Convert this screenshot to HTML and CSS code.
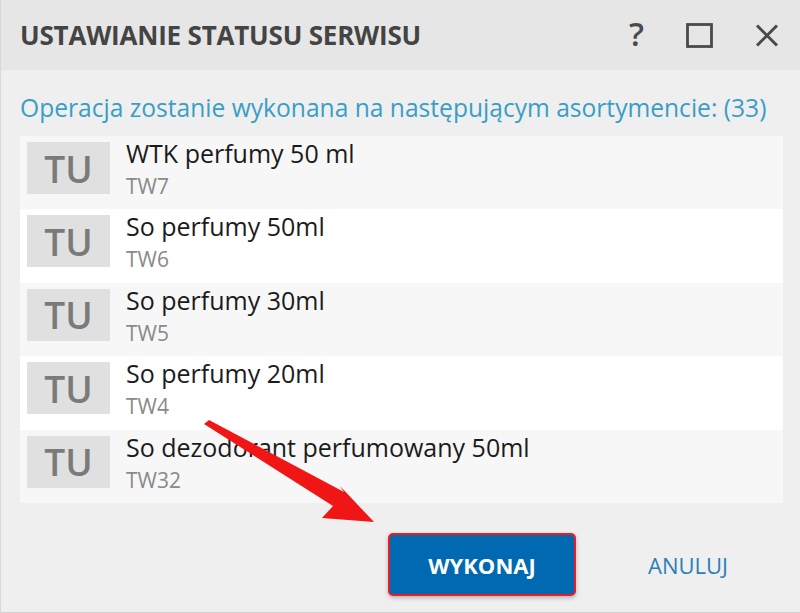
FILE: index.html
```html
<!DOCTYPE html>
<html lang="pl">
<head>
  <meta charset="UTF-8" />
  <title>Ustawianie statusu serwisu</title>
  <link rel="stylesheet" href="styles.css">
</head>
<body>
  <div class="dialog">
    <div class="header">
      <h1>Ustawianie statusu serwisu</h1>
      <div class="header-icons">
        <span class="help">?</span>
        <svg class="icon" width="27" height="25" viewBox="0 0 27 25"><rect x="1.5" y="1.5" width="24" height="22" fill="none" stroke="#4a4a4a" stroke-width="2.8"/></svg>
        <svg class="icon" width="24" height="23" viewBox="0 0 24 23"><path d="M2 1.5 L22 21.5 M22 1.5 L2 21.5" stroke="#4a4a4a" stroke-width="3"/></svg>
      </div>
    </div>

    <div class="content">
      <p class="info">Operacja zostanie wykonana na następującym asortymencie: (33)</p>
      <div class="list">
        <div class="row">
          <div class="thumb">TU</div>
          <div class="text"><div class="name">WTK perfumy 50 ml</div><div class="code">TW7</div></div>
        </div>
        <div class="row">
          <div class="thumb">TU</div>
          <div class="text"><div class="name">So perfumy 50ml</div><div class="code">TW6</div></div>
        </div>
        <div class="row">
          <div class="thumb">TU</div>
          <div class="text"><div class="name">So perfumy 30ml</div><div class="code">TW5</div></div>
        </div>
        <div class="row">
          <div class="thumb">TU</div>
          <div class="text"><div class="name">So perfumy 20ml</div><div class="code">TW4</div></div>
        </div>
        <div class="row">
          <div class="thumb">TU</div>
          <div class="text"><div class="name">So dezodorant perfumowany 50ml</div><div class="code">TW32</div></div>
        </div>
      </div>

      <div class="actions">
        <button class="btn-primary">Wykonaj</button>
        <button class="btn-link">Anuluj</button>
      </div>
    </div>

    <!-- annotation arrow -->
    <svg class="arrow" width="800" height="613" viewBox="0 0 800 613">
      <polygon points="204,424 209,420 344,492 340,486 374,522 322,518 333,506" fill="#f01616"/>
    </svg>
  </div>
</body>
</html>
```

FILE: styles.css
```css
* { box-sizing: border-box; }
body {
  margin: 0;
  font-family: "Open Sans", "Noto Sans", sans-serif;
  background: #efefef;
}
.dialog {
  position: relative;
  width: 800px;
  height: 613px;
  background: #efefef;
  border-left: 1px solid #d8d8d8;
  border-bottom: 1px solid #d0d0d0;
  display: flex;
  flex-direction: column;
}
.header {
  height: 70px;
  background: #e6e6e6;
  display: flex;
  align-items: center;
  justify-content: space-between;
  padding: 0 21px 0 19px;
}
.header h1 {
  margin: 0;
  font-size: 26px;
  font-weight: 700;
  text-transform: uppercase;
  color: #444;
  letter-spacing: -0.2px;
}
.header-icons {
  display: flex;
  align-items: center;
  gap: 42px;
}
.help {
  font-size: 33px;
  font-weight: 600;
  color: #4a4a4a;
  line-height: 1;
  margin-top: -3px;
}
.content {
  flex: 1;
  padding: 0 17px 0 19px;
  display: flex;
  flex-direction: column;
}
.info {
  margin: 21px 0 12px 0;
  font-size: 24.6px;
  line-height: 33px;
  color: #3a9ec6;
  white-space: nowrap;
}
.list {
  height: 367px;
  background: #fff;
  border-bottom: 1px solid #fafafa;
}
.row {
  height: 73.4px;
  display: flex;
  align-items: flex-start;
  padding: 6px 7px;
  background: #f7f7f7;
}
.row:nth-child(even) { background: #fff; }
.thumb {
  width: 83px;
  height: 52px;
  background: #e0e0e0;
  color: #7a7a7a;
  font-size: 37px;
  font-weight: 600;
  display: flex;
  align-items: center;
  justify-content: center;
  flex-shrink: 0;
}
.text { margin-left: 16px; }
.name {
  font-size: 25px;
  color: #1b1b1b;
  line-height: 28px;
  margin-top: -3px;
}
.code {
  font-size: 21px;
  color: #8a8a8a;
  line-height: 24px;
  margin-top: 7px;
}
.actions {
  display: flex;
  align-items: center;
  padding: 30px 0 0 368px;
}
.btn-primary {
  width: 188px;
  height: 63px;
  background: #0069b1;
  color: #fff;
  border: 2px solid #ee1b24;
  border-radius: 5px;
  box-shadow: 0 2px 4px rgba(0,0,0,0.25);
  font-family: inherit;
  font-size: 22px;
  font-weight: 700;
  text-transform: uppercase;
}
.btn-link {
  margin-left: 72px;
  padding: 0;
  background: none;
  border: none;
  color: #2c7fb6;
  font-family: inherit;
  font-size: 22px;
  text-transform: uppercase;
}
.arrow {
  position: absolute;
  left: -1px;
  top: 0;
  pointer-events: none;
}
```
